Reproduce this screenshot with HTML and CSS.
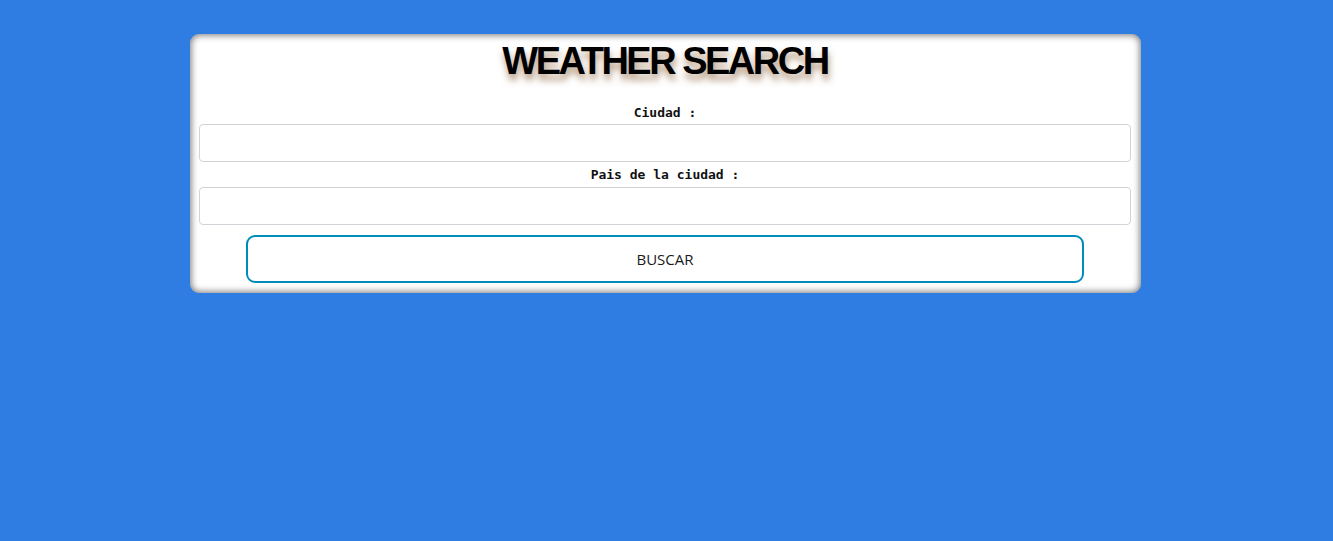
FILE: index.html
```html
<!DOCTYPE html>
<html lang="es">
<head>
<meta charset="utf-8">
<title>Weather Search</title>
<link rel="stylesheet" href="styles.css">
</head>
<body>
<main class="card">
  <h1 class="title">WEATHER SEARCH</h1>
  <form class="form">
    <label class="label" for="city">Ciudad :</label>
    <input class="input" id="city" type="text">
    <label class="label label-second" for="country">Pais de la ciudad :</label>
    <input class="input" id="country" type="text">
    <button class="button" type="button">BUSCAR</button>
  </form>
</main>
</body>
</html>
```

FILE: styles.css
```css
html, body {
  margin: 0;
  padding: 0;
}
body {
  background: #2f7de2;
  min-height: 541px;
  padding-top: 34px;
  box-sizing: border-box;
}
.card {
  width: 951px;
  margin: 0 0 0 calc(50% - 476.5px);
  background: #fff;
  border-radius: 9px;
  box-shadow: inset 0 0 7px 1px rgba(0,0,0,0.55);
  padding: 5px 10px 10px 9px;
  box-sizing: border-box;
}
.title {
  margin: 0;
  text-align: center;
  font-family: "Liberation Sans", Arial, sans-serif;
  font-weight: bold;
  font-size: 38px;
  line-height: 44px;
  letter-spacing: -2.5px;
  color: #000;
  text-shadow: 1px 6px 7px rgba(120, 70, 20, 0.55);
}
.form {
  display: flex;
  flex-direction: column;
  align-items: center;
  margin-top: 22px;
}
.label {
  font-family: "DejaVu Sans Mono", monospace;
  font-weight: bold;
  font-size: 13px;
  line-height: 15px;
  color: #111;
  margin-bottom: 4px;
}
.label-second {
  margin-top: 5px;
  margin-bottom: 5px;
}
.input {
  display: block;
  width: 100%;
  height: 38px;
  box-sizing: border-box;
  border: 1px solid #d0d3d8;
  border-radius: 4px;
  background: #fff;
  margin: 0;
  padding: 0 10px;
  outline: none;
}
.button {
  width: 838px;
  height: 48px;
  margin-top: 10px;
  border: 2px solid #008cba;
  border-radius: 9px;
  background: #fff;
  font-family: "Open Sans", sans-serif;
  font-size: 15px;
  color: #1a1a1a;
  padding: 0;
}
```
